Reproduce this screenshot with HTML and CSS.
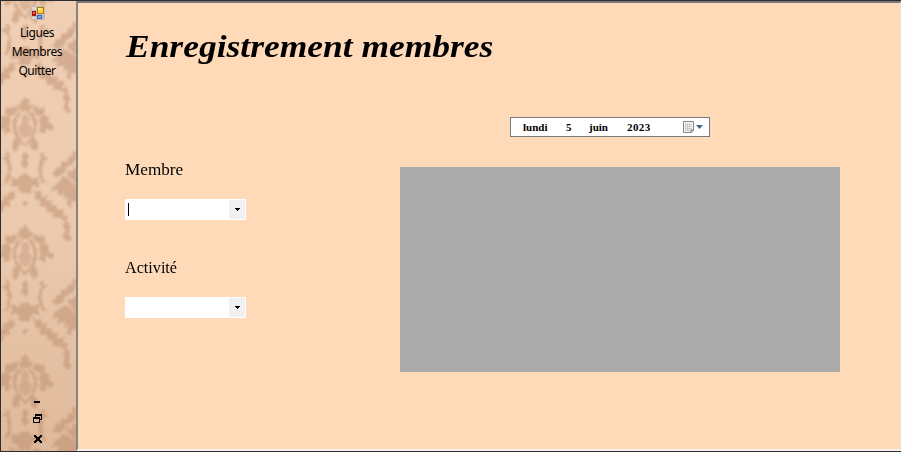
FILE: index.html
```html
<!DOCTYPE html>
<html lang="fr">
<head>
<meta charset="utf-8">
<title>Enregistrement membres</title>
<link rel="stylesheet" href="styles.css">
</head>
<body>
<div class="window">
  <aside class="sidebar">
    <svg class="damask" width="75" height="450" viewBox="1 1 75 450" aria-hidden="true">
      <defs>
        <linearGradient id="paper" x1="0" y1="0" x2="0" y2="1">
          <stop offset="0" stop-color="#f1cfb4"/>
          <stop offset=".5" stop-color="#eccaae"/>
          <stop offset="1" stop-color="#dfb99b"/>
        </linearGradient>
        <filter id="soft" x="0" y="0" width="1" height="1">
          <feTurbulence type="fractalNoise" baseFrequency=".22" numOctaves="2" seed="4" result="grain"/>
          <feDisplacementMap in="SourceGraphic" in2="grain" scale="4" xChannelSelector="R" yChannelSelector="G"/>
          <feGaussianBlur stdDeviation=".95"/>
        </filter>
        <g id="half">
          <path d="M0 0L2 5L5 6L4 10L8 9L6 14L3 16H0Z"/>
          <path d="M7 14L11 10L14 14L19 12L20 18L16 21L11 20Z"/>
          <path d="M13 25L18 20L25 23L23 27L29 31L26 36L21 33L20 39L14 37L16 30Z"/>
          <path d="M5 16C14 22 14 35 8 43L12 46L10 51L5 47L0 53V49L5 43C11 34 9 23 3 18Z"/>
          <path d="M0 18L4 22L3 28L7 33L5 41L0 44Z" opacity=".75"/>
          <path d="M7 44L13 48L12 55L9 57L5 50Z"/>
          <path d="M0 57L3 60L2 65L4 69L0 74Z"/>
          <path d="M15 59L20 57L18 62L24 62L18 67L17 74C17 80 19 85 22 90L17 87C13 80 12 69 16 64Z"/>
          <path d="M0 79L4 80L7 84L14 82L13 87L15 92L7 91L5 99L0 98Z"/>
          <path d="M0 106L4 106L1 110L0 112Z"/>
          <path d="M7 94L13 98L14 94L18 102L22 99L21 106L27 105L26 110L33 110L32 115L39 114L38 121L43 121L42 126L45 130L43 139L47 144L43 147L38 141L41 134L37 132L40 127L34 123L27 122L29 118L21 117L22 112L14 111L16 106L9 103L11 100Z"/>
          <path d="M27 79L31 75L30 71L35 73L37 66L42 68L43 61L48 62L47 56L51 56L51 63L47 70L41 73L38 79L32 82Z"/>
        </g>
        <g id="motif"><use href="#half"/><use href="#half" transform="scale(-1 1)"/></g>
        <g id="fruit">
          <path d="M0-25L4-19L8-22L7-15L3-12L0-7L-3-12L-7-15L-8-22L-4-19Z"/>
          <path d="M-5-11L-12-15L-15-10L-20-7L-23 0L-17-2L-18 4L-10 3L-12 9L-7 6L-8 15L-4 16L-3 9L0 11V-6Z"/>
          <path d="M5-11L12-15L15-10L20-7L23 0L17-2L18 4L10 3L12 9L7 6L8 15L4 16L3 9L0 11V-6Z"/>
        </g>
        <g id="repeat">
          <use href="#motif" x="25" y="95"/>
          <use href="#fruit" x="75" y="191"/>
        </g>
      </defs>
      <rect x="1" y="1" width="75" height="450" fill="url(#paper)"/>
      <g filter="url(#soft)">
        <rect x="-8" y="-8" width="94" height="470" fill="none"/>
        <g class="damask-ink">
          <use href="#repeat" y="-257"/>
          <use href="#repeat" y="-128"/>
          <use href="#repeat"/>
          <use href="#repeat" y="128"/>
          <use href="#repeat" y="257"/>
        </g>
      </g>
    </svg>
    <nav class="menu">
      <svg class="app-icon" width="14" height="14" viewBox="0 0 14 14">
        <path fill="#c4bbb3" d="M0 0h14v14H0z"/>
        <path fill="#e1d8d1" d="M1 1h4v3H1zM1 11h4v2H1z"/>
        <path fill="#a51512" d="M1 5h4v5H1z"/><path fill="#e76553" d="M2 6h2v2H2z"/>
        <path fill="#b28009" d="M6 1h7v7H6z"/><path fill="#ffd33b" d="M7 2h5v5H7z"/><path fill="#ffed92" d="M7 2h3v2H7z"/>
        <path fill="#3968c7" d="M6 9h5v4H6z"/><path fill="#76a5f2" d="M7 10h3v2H7z"/>
      </svg>
      <a class="menu-item">Ligues</a>
      <a class="menu-item">Membres</a>
      <a class="menu-item">Quitter</a>
    </nav>
    <div class="window-buttons">
      <svg width="10" height="45" viewBox="0 0 10 45" shape-rendering="crispEdges">
        <path d="M1 1h6v2H1z"/>
        <path fill-rule="evenodd" d="M2 14h7v6H7v3H0v-6h2zM3 16v1h4v2h1v-3zM1 19v3h5v-3z"/>
        <path d="M1 35h2v1h1v1h2v-1h1v-1h2v2H8v1H7v2h1v1h1v2H7v-1H6v-1H4v1H3v1H1v-2h1v-1h1v-2H2v-1H1z"/>
      </svg>
    </div>
  </aside>
  <main class="content">
    <h1 class="title"><span>Enregistrement membres</span></h1>
    <div class="date-picker">
      <span class="day">lundi</span><span class="number">5</span><span class="month">juin</span><span class="year">2023</span>
      <svg class="calendar" width="22" height="14" viewBox="0 0 22 14">
        <path d="M1.5 1.5h10v9l-2 2h-8z" fill="#f3f3f3" stroke="#888"/>
        <path d="M3 4.5h7M3 6.5h7M3 8.5h7M3 10.5h5M3.5 3v8M5.5 3v8M7.5 3v8" stroke="#bbc0c7" stroke-width=".7"/>
        <path d="M9 12.5V10h3" fill="none" stroke="#777"/>
        <path d="M14 5h7l-3.5 4z" fill="#466584"/>
      </svg>
    </div>
    <div class="form-row">
      <form class="fields">
        <label class="label membre"><span>Membre</span></label>
        <div class="combo"><i class="caret"></i><span class="drop"><svg width="5" height="3" viewBox="0 0 5 3" shape-rendering="crispEdges"><path d="M0 0h5v1H4v1H3v1H2V2H1V1H0z"/></svg></span></div>
        <label class="label activite"><span>Activité</span></label>
        <div class="combo"><span class="drop"><svg width="5" height="3" viewBox="0 0 5 3" shape-rendering="crispEdges"><path d="M0 0h5v1H4v1H3v1H2V2H1V1H0z"/></svg></span></div>
      </form>
      <section class="data-grid"></section>
    </div>
  </main>
</div>
</body>
</html>
```
FILE: styles.css
```css
* { box-sizing: border-box; }
body { margin: 0; }
.window {
  display: grid;
  grid-template-columns: 75px 1fr;
  width: 901px;
  height: 452px;
  padding: 1px 0 1px 1px;
  background: #2e2d30;
  overflow: hidden;
}
.sidebar {
  position: relative;
  display: flex;
  flex-direction: column;
  justify-content: space-between;
  height: 450px;
}
.damask { position: absolute; inset: 0; }
.damask-ink { fill: #b98b6c; opacity: .5; }
.menu {
  position: relative;
  display: flex;
  flex-direction: column;
  align-items: center;
  padding-top: 5px;
  font: 12px/19px "Noto Sans", "Open Sans", sans-serif;
  color: #000;
}
.app-icon { margin: 0 1px 3px 0; }
.menu-item { height: 19px; margin-right: 3px; letter-spacing: -.45px; }
.window-buttons {
  position: relative;
  height: 51px;
  padding-left: 32px;
}
.window-buttons svg { display: block; }
.content {
  height: 450px;
  padding: 0 0 0 47px;
  border: solid;
  border-width: 2px 1px 2px 2px;
  border-color: #777 #e6e3e1 #f4f1ef #858585;
  background: #ffdab9;
  font-family: "Liberation Serif", serif;
  color: #000;
}
.title {
  height: 60px;
  margin: 0;
  padding: 24px 0 0 1px;
  font: italic bold 32px/38px "Liberation Serif", serif;
  white-space: nowrap;
}
.title span { display: inline-block; transform: scaleX(1.108); transform-origin: left; }
.date-picker {
  display: flex;
  align-items: center;
  width: 200px;
  height: 20px;
  margin: 54px 0 0 385px;
  padding-left: 12px;
  border: 1px solid #7a7a7a;
  background: #fff;
  font-size: 11px;
  font-weight: bold;
}
.day { width: 43px; }
.number { width: 23px; }
.month { width: 38px; }
.year { width: 55px; letter-spacing: .4px; }
.calendar { flex: none; }
.form-row { display: flex; }
.fields { width: 275px; padding-top: 22px; }
.label { display: block; height: 40px; font-size: 17px; line-height: 22px; white-space: nowrap; }
.label span { display: inline-block; transform-origin: left; }
.membre span { transform: scaleX(1.01); }
.activite { margin-top: 37px; }
.activite span { transform: scaleX(.95); }
.combo {
  display: flex;
  align-items: center;
  width: 121px;
  height: 21px;
  padding: 1px;
  background: #fff;
}
.caret { width: 1px; height: 13px; margin: -1px 0 0 2px; background: #000; }
.drop {
  display: grid;
  place-items: center;
  width: 16px;
  height: 19px;
  margin-left: auto;
  background: #f0f0f0;
}
.data-grid { width: 440px; height: 205px; margin-top: 30px; background: #ababab; }
```
